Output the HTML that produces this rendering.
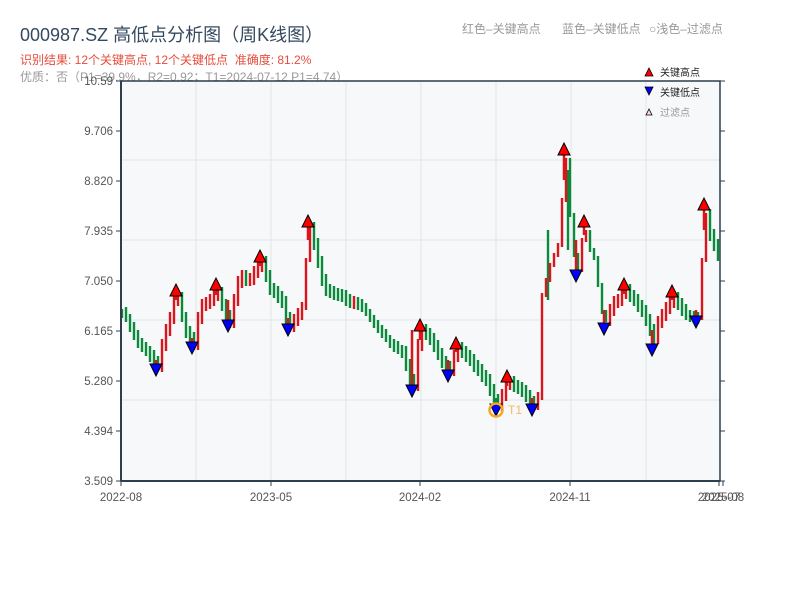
<!DOCTYPE html>
<html><head><meta charset="utf-8">
<style>
html,body{margin:0;padding:0;background:#fff;width:800px;height:600px;overflow:hidden}
body{font-family:"Liberation Sans","Noto Sans CJK SC",sans-serif;position:relative}
.t{position:absolute;white-space:nowrap}
svg text{font-family:"Liberation Sans","Noto Sans CJK SC",sans-serif}
</style></head><body>
<div class="t" style="left:20px;top:68px;font-size:12px;color:#999">优质：否（P1=39.9%，R2=0.92；T1=2024-07-12 P1=4.74）</div>
<svg width="800" height="600" style="position:absolute;left:0;top:0" xmlns="http://www.w3.org/2000/svg">
<rect x="121" y="81" width="599" height="400" fill="#f6f8fa"/>
<g stroke="#e3e6ea" stroke-width="1">
<line x1="196" y1="81" x2="196" y2="481"/><line x1="271" y1="81" x2="271" y2="481"/><line x1="346" y1="81" x2="346" y2="481"/><line x1="421" y1="81" x2="421" y2="481"/><line x1="496" y1="81" x2="496" y2="481"/><line x1="571" y1="81" x2="571" y2="481"/><line x1="646" y1="81" x2="646" y2="481"/>
<line x1="121" y1="160" x2="720" y2="160"/><line x1="121" y1="240" x2="720" y2="240"/><line x1="121" y1="320" x2="720" y2="320"/><line x1="121" y1="400" x2="720" y2="400"/>
</g>
<path stroke="#0a8a3a" stroke-width="2.4" fill="none" d="M122 309V318M126 307V322M130 314V332M134 322V340M138 330V348M142 338V352M146 342V356M150 346V362M154 350V366M158 356V370M182 292V322M186 312V338M190 326V344M194 332V350M222 287V311M226 299V322M230 310V328M246 270V286M266 256V282M270 270V295M274 283V298M278 286V303M282 291V308M286 296V324M290 312V332M314 222V250M318 238V268M322 256V286M326 274V296M330 284V298M334 286V300M338 288V301M342 289V302M346 290V306M350 294V308M358 297V310M362 299V312M366 303V316M370 309V322M374 315V328M378 320V333M382 325V338M386 329V342M390 335V348M394 339V352M398 341V354M402 345V358M406 346V371M410 359V386M414 374V391M426 324V340M430 328V345M434 333V352M438 340V360M442 348V368M446 356V373M450 361V376M462 342V358M466 346V362M470 350V366M474 354V372M478 360V376M482 364V382M486 370V386M490 374V396M494 384V406M498 394V411M514 376V392M518 380V394M522 382V397M526 385V402M530 390V408M534 396V410M548 230V300M568 170V250M570 158V217M574 213V257M578 253V272M590 230V252M594 248V260M598 256V287M602 283V314M606 310V322M630 284V302M634 290V306M638 294V312M642 300V317M646 305V326M650 314V336M654 324V344M678 292V310M682 298V316M686 304V320M690 310V322M694 311V323M698 312V324M710 209V241M714 229V251M718 239V261"/>
<path stroke="#d9161c" stroke-width="2.4" fill="none" d="M162 339V372M166 324V351M170 312V336M174 294V324M178 290V306M198 312V350M202 299V324M206 297V311M210 294V309M214 289V306M218 285V301M234 294V328M238 276V306M242 270V288M250 273V286M254 266V285M258 260V278M262 256V272M294 314V332M298 308V326M302 302V320M306 258V310M310 224V262M354 296V309M418 339V391M422 324V351M454 350V376M458 342V362M502 389V411M506 378V401M510 376V390M538 392V410M542 293V400M546 278V297M550 263V282M554 253V267M558 243V257M562 198V247M566 158V202M582 238V272M586 230V242M610 304V326M614 296V316M618 294V308M622 287V306M626 284V299M658 316V344M662 309V328M666 302V321M670 296V314M674 292V308M702 258V320M706 213V262"/>
<g stroke="#d9161c" stroke-width="2.5">
<line x1="176" y1="290" x2="176" y2="300"/><line x1="216" y1="284" x2="216" y2="295"/><line x1="260" y1="256" x2="260" y2="266"/><line x1="308" y1="221" x2="308" y2="240"/><line x1="420" y1="325" x2="420" y2="340"/><line x1="456" y1="343" x2="456" y2="352"/><line x1="507" y1="376" x2="507" y2="386"/><line x1="564" y1="149" x2="564" y2="180"/><line x1="584" y1="221" x2="584" y2="235"/><line x1="624" y1="284" x2="624" y2="294"/><line x1="672" y1="291" x2="672" y2="300"/><line x1="704" y1="204" x2="704" y2="230"/>
<line x1="156" y1="360" x2="156" y2="370"/><line x1="192" y1="338" x2="192" y2="348"/><line x1="228" y1="300" x2="228" y2="326"/><line x1="288" y1="318" x2="288" y2="330"/><line x1="412" y1="330" x2="412" y2="391"/><line x1="448" y1="360" x2="448" y2="376"/><line x1="532" y1="398" x2="532" y2="410"/><line x1="576" y1="240" x2="576" y2="276"/><line x1="604" y1="310" x2="604" y2="329"/><line x1="652" y1="330" x2="652" y2="350"/><line x1="696" y1="310" x2="696" y2="322"/>
</g>
<line x1="496" y1="398" x2="496" y2="410" stroke="#0a8a3a" stroke-width="2.5"/>
<g fill="#f00" stroke="#000" stroke-width="1">
<polygon points="170,296 182,296 176,284"/><polygon points="210,290 222,290 216,278"/><polygon points="254,262 266,262 260,250"/><polygon points="302,227 314,227 308,215"/><polygon points="414,331 426,331 420,319"/><polygon points="450,349 462,349 456,337"/><polygon points="501,382 513,382 507,370"/><polygon points="558,155 570,155 564,143"/><polygon points="578,227 590,227 584,215"/><polygon points="618,290 630,290 624,278"/><polygon points="666,297 678,297 672,285"/><polygon points="698,210 710,210 704,198"/>
</g>
<g fill="#00f" stroke="#000" stroke-width="1">
<polygon points="150,364 162,364 156,376"/><polygon points="186,342 198,342 192,354"/><polygon points="222,320 234,320 228,332"/><polygon points="282,324 294,324 288,336"/><polygon points="406,385 418,385 412,397"/><polygon points="442,370 454,370 448,382"/><polygon points="490,404 502,404 496,416"/><polygon points="526,404 538,404 532,416"/><polygon points="570,270 582,270 576,282"/><polygon points="598,323 610,323 604,335"/><polygon points="646,344 658,344 652,356"/><polygon points="690,316 702,316 696,328"/>
</g>
<circle cx="496" cy="410" r="6.5" fill="none" stroke="#f5a623" stroke-width="2.5"/>
<text x="508" y="414" font-size="12" fill="#f5b85a">T1</text>
<rect x="121" y="81" width="599" height="400" fill="none" stroke="#2c3e50" stroke-width="1.5"/>
<line x1="121" y1="481" x2="720" y2="481" stroke="#2c3e50" stroke-width="2"/>
<line x1="121" y1="81" x2="121" y2="481" stroke="#2c3e50" stroke-width="2"/>
<path stroke="#2c3e50" stroke-width="1" d="M116 81H121M116 131H121M116 181H121M116 231H121M116 281H121M116 331H121M116 381H121M116 431H121M116 481H121M720 81H725M720 131H725M720 181H725M720 231H725M720 281H725M720 331H725M720 381H725M720 431H725M720 481H725M121 481V486M271 481V486M420 481V486M570 481V486M719 481V486M723 481V486"/>
<g font-size="11.5" fill="#555" text-anchor="end">
<text x="113" y="85">10.59</text><text x="113" y="135">9.706</text><text x="113" y="185">8.820</text><text x="113" y="235">7.935</text><text x="113" y="285">7.050</text><text x="113" y="335">6.165</text><text x="113" y="385">5.280</text><text x="113" y="435">4.394</text><text x="113" y="485">3.509</text>
</g>
<g font-size="11.5" fill="#555" text-anchor="middle">
<text x="121" y="501">2022-08</text><text x="271" y="501">2023-05</text><text x="420" y="501">2024-02</text><text x="570" y="501">2024-11</text><text x="719" y="501">2025-07</text><text x="723" y="501">2025-08</text>
</g>
<polygon points="645,76 653,76 649,68" fill="#f00" stroke="#000" stroke-width="0.8"/>
<text x="660" y="76" font-size="10" fill="#222">关键高点</text>
<polygon points="645,87 653,87 649,95" fill="#00f" stroke="#000" stroke-width="0.8"/>
<text x="660" y="96" font-size="10" fill="#222">关键低点</text>
<polygon points="646,115 652,115 649,109" fill="#fdd" stroke="#000" stroke-width="0.8"/>
<text x="660" y="116" font-size="10" fill="#999">过滤点</text>
</svg>
<div class="t" style="left:20px;top:21px;font-size:18px;color:#34495e">000987.SZ 高低点分析图（周K线图）</div>
<div class="t" style="left:20px;top:51px;font-size:12px;color:#e74c3c">识别结果: 12个关键高点, 12个关键低点&nbsp;&nbsp;准确度: 81.2%</div>
<div class="t" style="left:462px;top:20px;font-size:12px;color:#999">红色–关键高点</div>
<div class="t" style="left:562px;top:20px;font-size:12px;color:#999">蓝色–关键低点</div>
<div class="t" style="left:649px;top:20px;font-size:12px;color:#999">○浅色–过滤点</div>
</body></html>
